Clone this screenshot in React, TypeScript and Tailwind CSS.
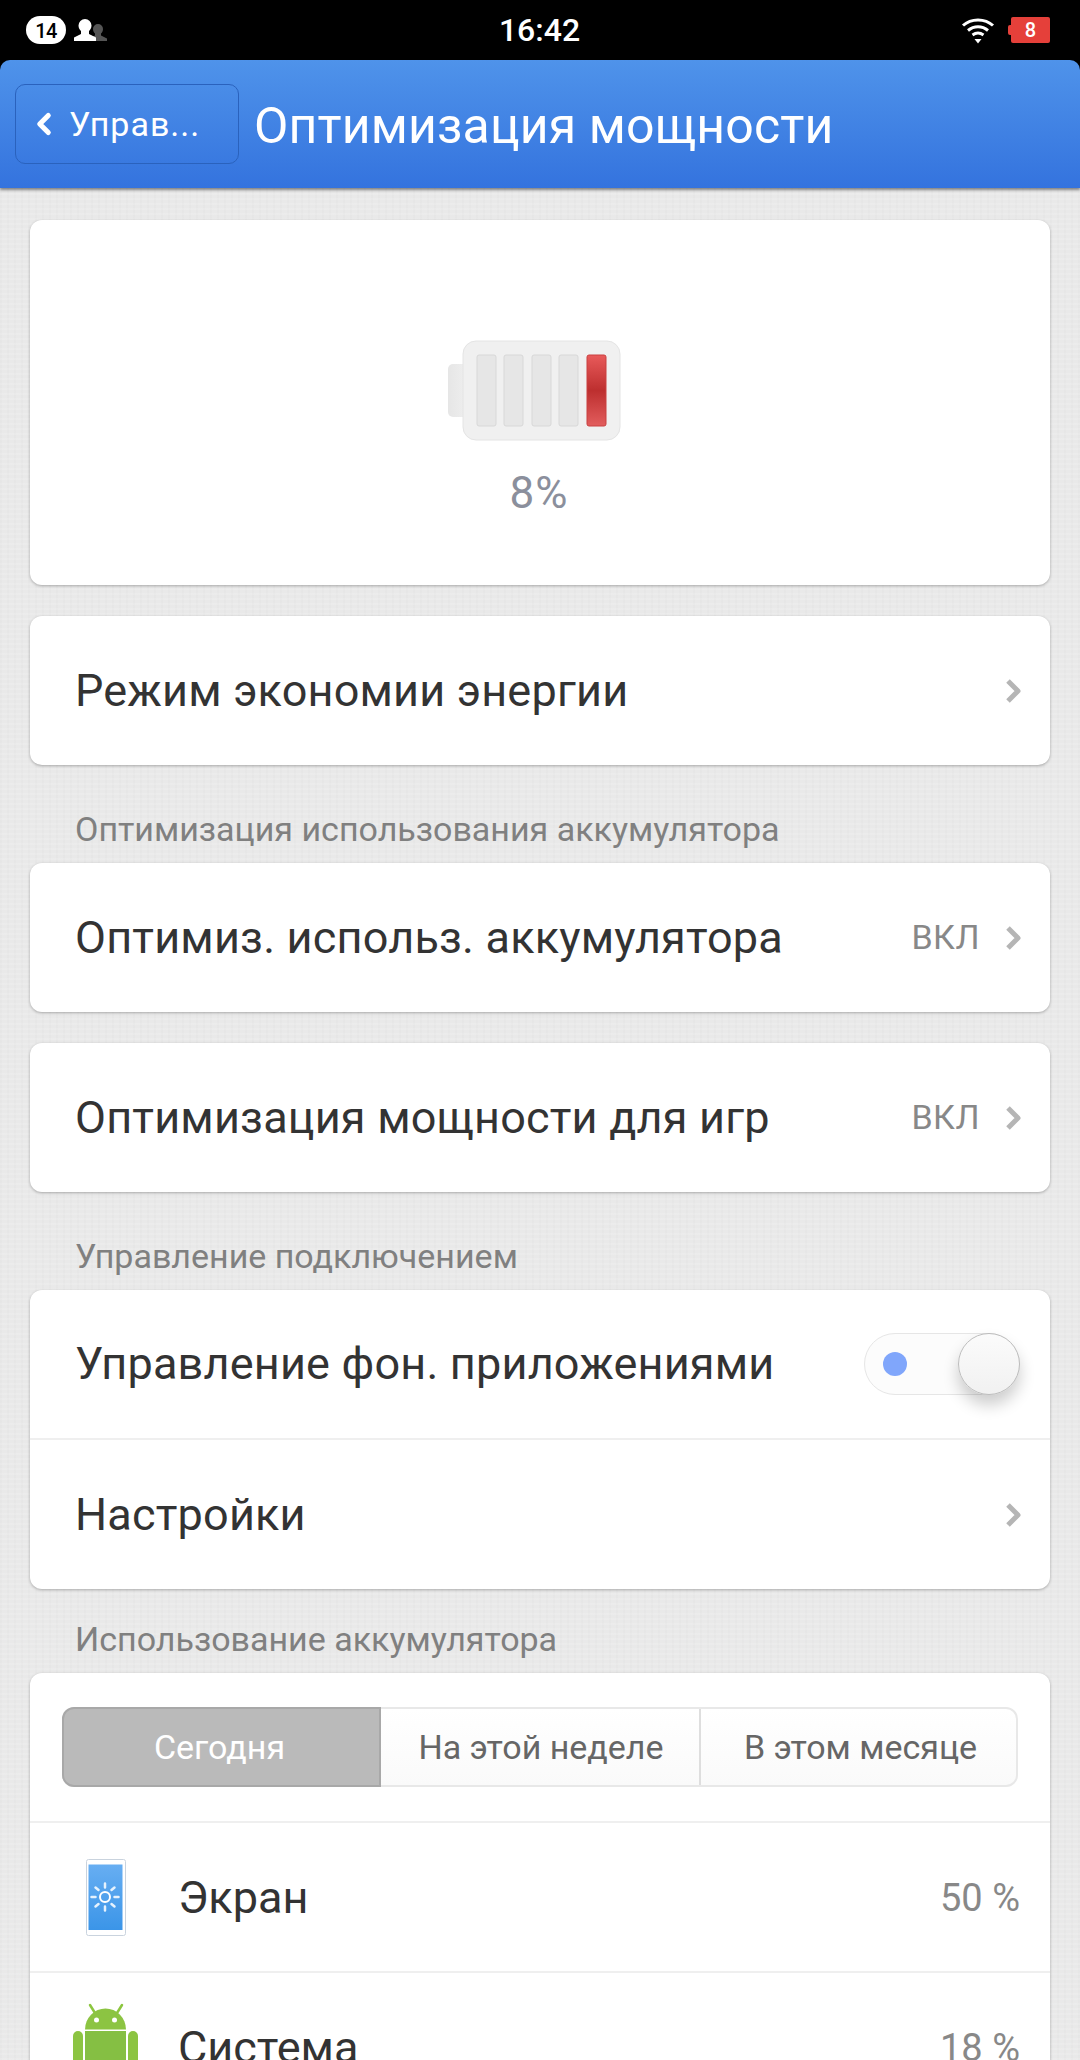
import { ChevronLeft } from "lucide-react";

const linen =
  "bg-[#e9e9e9] bg-[repeating-linear-gradient(0deg,rgba(255,255,255,0.12)_0px,rgba(255,255,255,0.12)_2px,transparent_2px,transparent_5px),repeating-linear-gradient(90deg,rgba(0,0,0,0.012)_0px,rgba(0,0,0,0.012)_2px,transparent_2px,transparent_7px)]";

const card = "mx-[30px] rounded-[12px] bg-white shadow-[0_1px_3px_rgba(0,0,0,0.28)]";

function Chevron() {
  return (
    <svg width="18" height="26" viewBox="0 0 18 26" className="shrink-0">
      <path d="M3 3l10 10L3 23" fill="none" stroke="#b5b5b5" strokeWidth="5" strokeLinejoin="round" />
    </svg>
  );
}

function StatusBar() {
  return (
    <div className="flex h-[60px] items-center bg-black pl-[26px] pr-[30px] text-white">
      <span className="flex h-[28px] w-[40px] items-center justify-center rounded-full bg-white pt-[1px] text-[20px] font-medium tracking-[-0.5px] text-black">
        14
      </span>
      <svg width="34" height="24" viewBox="0 0 34 24" className="ml-[8px]">
        <path d="M24 6a5 5 0 0 1 5 5c0 2-1 3.500-2 4.500v2l6 3v2.500H15v-2.500l6-3v-2c-1-1-2-2.500-2-4.500a5 5 0 0 1 5-5z" fill="#555" />
        <path d="M11 1a6.500 6.500 0 0 1 6.500 6.500c0 2.500-1.200 4.500-2.500 5.500v3l7 3.500v3.500H0v-3.500l7-3.500v-3C5.700 12 4.500 10 4.500 7.500A6.500 6.500 0 0 1 11 1z" fill="#fff" />
      </svg>
      <span className="flex-1 pl-[10px] text-center text-[32px] font-medium leading-none">16:42</span>
      <svg width="34" height="28" viewBox="0 0 34 28" className="mr-[16px]">
        <path d="M2 9.500C10 2 24 2 32 9.500M7 14.500c6-5 14-5 20 0M11.500 19c3.500-2.500 7.500-2.500 11 0" fill="none" stroke="#fff" strokeWidth="3" />
        <path d="M13.500 23h7L17 27.500z" fill="#fff" />
      </svg>
      <span className="relative flex h-[26px] w-[39px] items-center justify-center rounded-[2px] bg-[#e5403a] text-[20px] font-medium">
        <span className="absolute left-[-3px] top-[8px] h-[10px] w-[3px] rounded-l-[2px] bg-[#e5403a]" />
        8
      </span>
    </div>
  );
}

function Header() {
  return (
    <div className="flex h-[128px] items-center rounded-t-[10px] bg-[linear-gradient(#4f93ea,#3473de)] pl-[15px] shadow-[0_2px_3px_rgba(0,0,0,0.45)]">
      <div className="flex h-[80px] w-[224px] items-center rounded-[10px] border border-[#2a62bd] pl-[11px] text-white">
        <ChevronLeft size={34} strokeWidth={3.6} />
        <span className="ml-[8px] text-[34px] tracking-[1px]">Управ...</span>
      </div>
      <span className="ml-[15px] pt-[4px] text-[50px] tracking-[0.15px] text-white">Оптимизация мощности</span>
    </div>
  );
}

function Battery() {
  return (
    <svg width="174" height="102" viewBox="0 0 174 102" className="mr-[12px]">
      <defs>
        <linearGradient id="red" x1="0" y1="0" x2="0" y2="1">
          <stop offset="0" stopColor="#e85a5a" />
          <stop offset="0.5" stopColor="#bd2f2f" />
          <stop offset="1" stopColor="#e25d5d" />
        </linearGradient>
        <linearGradient id="nub" x1="0" y1="0" x2="1" y2="0">
          <stop offset="0" stopColor="#e6e6e6" />
          <stop offset="1" stopColor="#f1f1f1" />
        </linearGradient>
      </defs>
      <rect x="1" y="24" width="24" height="53" rx="5" fill="url(#nub)" />
      <rect x="16" y="1" width="157" height="99" rx="13" fill="#f0f0f0" stroke="#e4e4e4" strokeWidth="1" />
      {[30, 57, 85, 112].map((x) => (
        <rect key={x} x={x} y="15" width="19" height="71" rx="2" fill="#e6e6e6" stroke="#d8d8d8" strokeWidth="1" />
      ))}
      <rect x="140" y="15" width="19" height="71" rx="2" fill="url(#red)" stroke="#c94141" strokeWidth="1" />
    </svg>
  );
}

function Row({ title, value }: { title: string; value?: string }) {
  return (
    <div className="flex h-[149px] items-center pl-[45px] pr-[27px]">
      <span className="flex-1 text-[45px] tracking-[0.2px] text-[#333]">{title}</span>
      {value && <span className="mr-[25px] text-[34px] tracking-[0.5px] text-[#888]">{value}</span>}
      <Chevron />
    </div>
  );
}

function SectionLabel({ children, className }: { children: string; className?: string }) {
  return (
    <div className={`flex items-end pl-[75px] text-[34px] leading-[38px] text-[#808080] ${className}`}>
      {children}
    </div>
  );
}

function Toggle() {
  return (
    <div className="relative h-[62px] w-[156px] rounded-full border border-[#e6e6e6] bg-[#fcfcfc]">
      <span className="absolute left-[18px] top-[18px] h-[24px] w-[24px] rounded-full bg-[#80a6fb]" />
      <span className="absolute right-[-1px] top-[-1px] h-[62px] w-[62px] rounded-full border border-[#bdbdbd] bg-[linear-gradient(#fbfbfb,#f1f1f1)] shadow-[0_10px_16px_rgba(0,0,0,0.2)]" />
    </div>
  );
}

function ScreenIcon() {
  return (
    <svg width="40" height="78" viewBox="0 0 40 78">
      <defs>
        <linearGradient id="scr" x1="0" y1="0" x2="0" y2="1">
          <stop offset="0" stopColor="#67aef2" />
          <stop offset="1" stopColor="#3b95e8" />
        </linearGradient>
      </defs>
      <rect x="0.500" y="0.500" width="39" height="76" rx="2" fill="#fff" stroke="#c9d3de" />
      <rect x="2.500" y="5.500" width="34" height="65.500" fill="url(#scr)" />
      <circle cx="19" cy="38" r="5" fill="none" stroke="#fff" strokeWidth="2" />
      <path
        d="M19 24.500v4M19 47.500v4M5.500 38h4M28.500 38h4M9.500 28.500l3 2.500M25.500 45l3 2.500M28.500 28.500l-3 2.500M12.500 45l-3 2.500"
        stroke="#e6f2fd"
        strokeWidth="2.500"
        strokeLinecap="round"
      />
    </svg>
  );
}

function AndroidIcon() {
  return (
    <svg width="66" height="90" viewBox="0 0 66 90">
      <path d="M17 2l5 8M49 2l-5 8" stroke="#8cc63f" strokeWidth="2.500" strokeLinecap="round" />
      <path d="M12 26.500a20.500 21 0 0 1 41 0z" fill="#8cc442" />
      <circle cx="23.500" cy="17" r="2.500" fill="#fff" />
      <circle cx="41.500" cy="17" r="2.500" fill="#fff" />
      <path d="M12 28h41v42a4 4 0 0 1-4 4H16a4 4 0 0 1-4-4z" fill="#85bf43" />
      <rect x="0" y="28" width="10" height="42" rx="5" fill="#8cc442" />
      <rect x="55" y="28" width="10" height="42" rx="5" fill="#8cc442" />
      <rect x="21" y="70" width="10" height="20" rx="5" fill="#85bf43" />
      <rect x="35" y="70" width="10" height="20" rx="5" fill="#85bf43" />
    </svg>
  );
}

function UsageRow({ icon, title, value }: { icon: React.ReactNode; title: string; value: string }) {
  return (
    <div className="flex h-[150px] items-center border-t-2 border-[#efefef] pr-[30px] pt-[2px]">
      <div className="flex w-[148px] justify-center pl-[4px]">{icon}</div>
      <span className="flex-1 text-[45px] text-[#333]">{title}</span>
      <span className="text-[38px] text-[#888]">{value}</span>
    </div>
  );
}

export default function App() {
  return (
    <div className={`h-[2060px] w-[1080px] overflow-hidden font-['Roboto',sans-serif] ${linen}`}>
      <div className="bg-black">
        <StatusBar />
        <Header />
      </div>

      <div className={`${card} mt-[32px] flex h-[365px] flex-col items-center pt-[120px]`}>
        <Battery />
        <span className="mr-[2px] mt-[28px] text-[44px] leading-[46px] tracking-[1px] text-[#8b8f9c]">8%</span>
      </div>

      <div className={`${card} mt-[31px]`}>
        <Row title="Режим экономии энергии" />
      </div>

      <SectionLabel className="h-[98px] pb-[15px]">Оптимизация использования аккумулятора</SectionLabel>

      <div className={card}>
        <Row title="Оптимиз. использ. аккумулятора" value="ВКЛ" />
      </div>

      <div className={`${card} mt-[31px]`}>
        <Row title="Оптимизация мощности для игр" value="ВКЛ" />
      </div>

      <SectionLabel className="h-[98px] pb-[15px]">Управление подключением</SectionLabel>

      <div className={card}>
        <div className="flex h-[150px] items-center border-b-2 border-[#efefef] pl-[45px] pr-[30px]">
          <span className="flex-1 text-[45px] tracking-[0.2px] text-[#333]">Управление фон. приложениями</span>
          <Toggle />
        </div>
        <Row title="Настройки" />
      </div>

      <SectionLabel className="h-[84px] pb-[15px]">Использование аккумулятора</SectionLabel>

      <div className={`${card} rounded-b-none`}>
        <div className="px-[32px] pb-[34px] pt-[34px]">
          <div className="grid h-[80px] grid-cols-[317px_320px_1fr] rounded-[12px] border-2 border-[#e8e8e8] bg-[linear-gradient(#fff,#fafafa)] text-[34px] text-[#666]">
            <div className="-m-[2px] mr-0 flex items-center justify-center rounded-l-[12px] border-2 border-[#a8a8a8] bg-[#bababa] pr-[4px] text-white">
              Сегодня
            </div>
            <div className="flex items-center justify-center border-r-2 border-[#dedede] pl-[2px]">На этой неделе</div>
            <div className="flex items-center justify-center pl-[4px]">В этом месяце</div>
          </div>
        </div>
        <UsageRow icon={<ScreenIcon />} title="Экран" value="50 %" />
        <UsageRow icon={<AndroidIcon />} title="Система" value="18 %" />
      </div>
    </div>
  );
}
